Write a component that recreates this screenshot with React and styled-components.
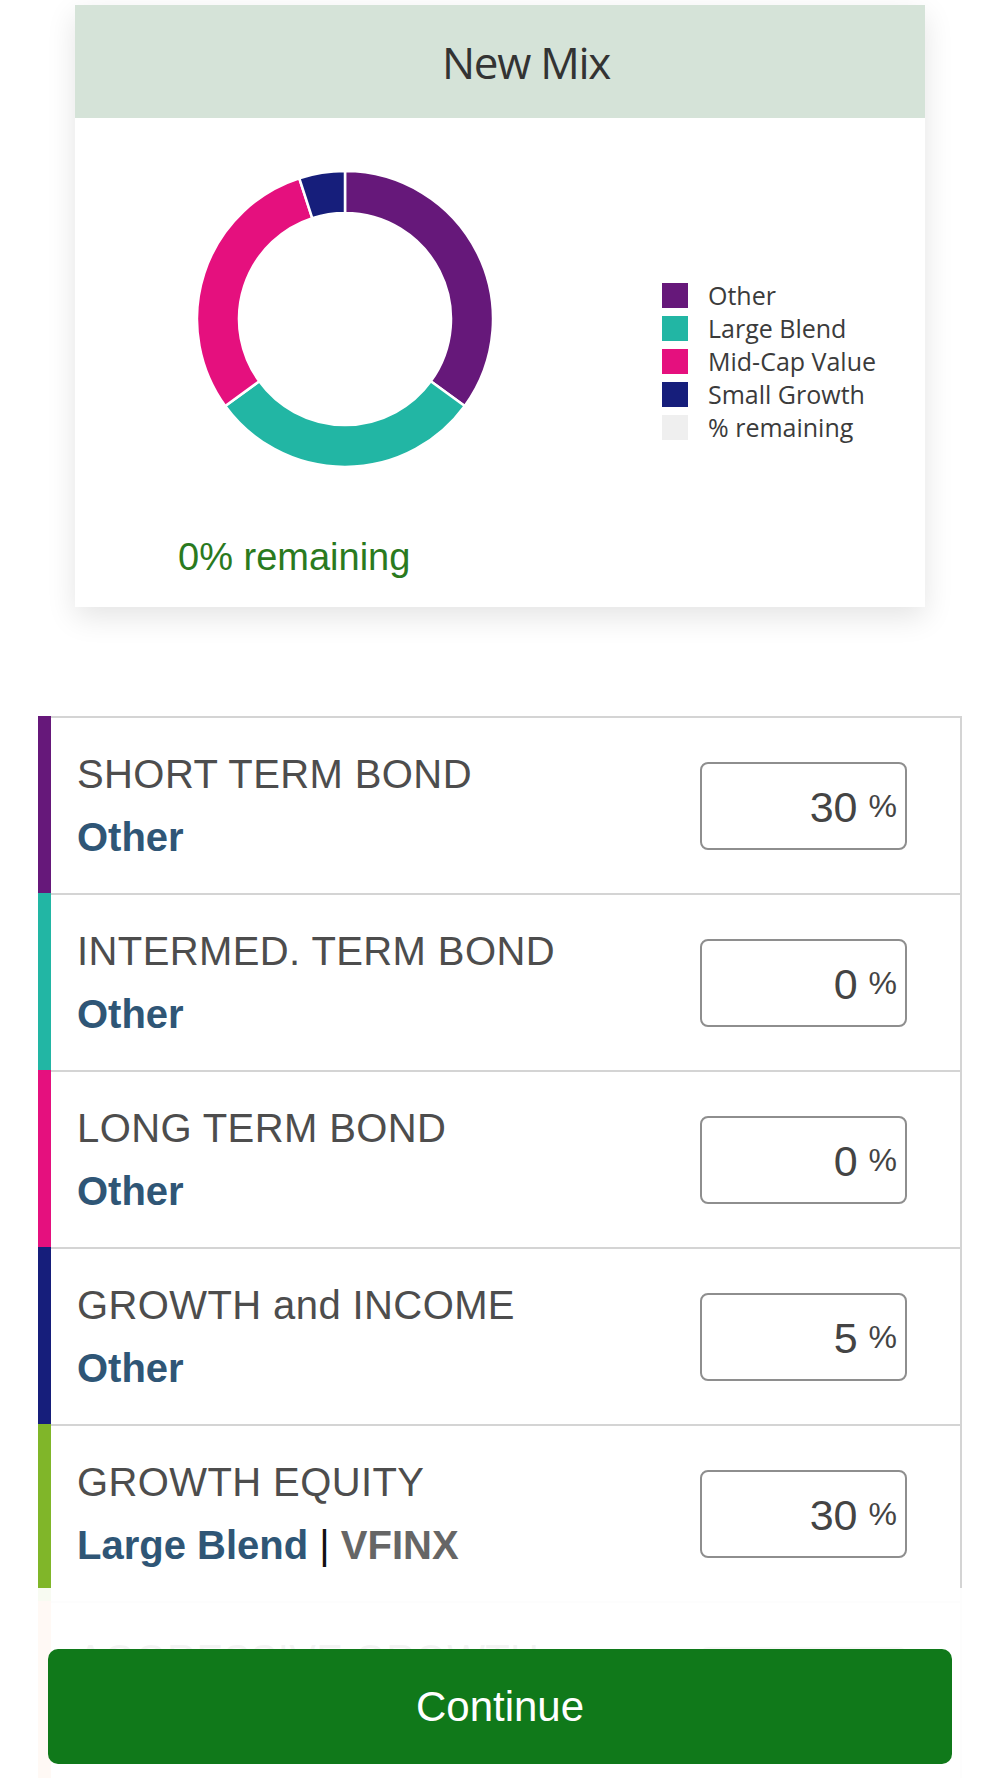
import React from 'react';
import styled, { createGlobalStyle } from 'styled-components';

const GlobalStyle = createGlobalStyle`
  html, body {
    margin: 0;
    padding: 0;
    background: #fff;
  }
  body {
    font-family: "Liberation Sans", Arial, sans-serif;
  }
`;

const Page = styled.div`
  position: relative;
  width: 1000px;
  min-height: 1778px;
  padding-top: 5px;
  box-sizing: border-box;
`;

const Card = styled.section`
  width: 850px;
  margin-left: 75px;
  background: #fff;
  box-shadow: 0 10px 28px rgba(0, 0, 0, 0.11);
`;

const CardHeader = styled.header`
  height: 113px;
  background: #d5e3d8;
  display: flex;
  align-items: center;
  justify-content: center;
  padding-left: 52px;
  font-family: "Open Sans", sans-serif;
  font-size: 44px;
  letter-spacing: -1.3px;
  color: #333;
`;

const CardBody = styled.div`
  padding-bottom: 28px;
`;

const ChartRow = styled.div`
  display: flex;
  align-items: flex-start;
`;

const Donut = styled.svg`
  display: block;
  margin-left: 120px;
  margin-top: 51px;
  flex: none;
`;

const Legend = styled.ul`
  list-style: none;
  margin: 165px 0 0 167px;
  padding: 0;
  display: flex;
  flex-direction: column;
  gap: 8px;
`;

const LegendItem = styled.li`
  display: flex;
  align-items: center;
  gap: 20px;
  height: 25px;
  font-family: "Open Sans", sans-serif;
  font-size: 25px;
  line-height: 25px;
  color: #3b3b3b;
`;

const Swatch = styled.span`
  width: 26px;
  height: 25px;
  background: ${(p) => p.color};
  flex: none;
`;

const Remaining = styled.div`
  margin-top: 66px;
  padding-left: 103px;
  font-size: 38px;
  line-height: 44px;
  color: #2a7a1e;
`;

const List = styled.div`
  width: 924px;
  margin: 109px 0 0 38px;
`;

const Row = styled.div`
  display: flex;
  height: 177px;
`;

const Bar = styled.div`
  width: 13px;
  flex: none;
  background: ${(p) => p.color};
`;

const RowBody = styled.div`
  flex: 1;
  display: flex;
  align-items: center;
  justify-content: space-between;
  border-top: 2px solid #d4d4d4;
  border-right: 2px solid #d4d4d4;
  padding: 0 53px 0 26px;
`;

const TextCol = styled.div`
  display: flex;
  flex-direction: column;
  gap: 15px;
`;

const Title = styled.div`
  font-size: 40px;
  line-height: 48px;
  letter-spacing: 0.4px;
  color: #4d4d4d;
`;

const Sub = styled.div`
  font-size: 40px;
  line-height: 48px;
  color: #111;
`;

const Category = styled.span`
  font-weight: bold;
  color: #2f5676;
`;

const Ticker = styled.span`
  font-weight: bold;
  color: #666;
`;

const PctBox = styled.div`
  width: 207px;
  height: 88px;
  box-sizing: border-box;
  border: 2px solid #8e8e8e;
  border-radius: 8px;
  padding-right: 8px;
  text-align: right;
  font-size: 43px;
  line-height: 84px;
  color: #444;
  white-space: nowrap;
`;

const PctSign = styled.span`
  font-size: 32px;
  vertical-align: 5px;
  margin-left: 11px;
`;

const Footer = styled.footer`
  position: fixed;
  left: 0;
  bottom: 0;
  width: 1000px;
  height: 190px;
  box-sizing: border-box;
  padding: 61px 48px 14px;
  background: rgba(255, 255, 255, 0.94);
`;

const ContinueButton = styled.button`
  display: block;
  width: 100%;
  height: 115px;
  border: none;
  border-radius: 10px;
  background: #10791a;
  color: #fff;
  font-family: "Liberation Sans", Arial, sans-serif;
  font-size: 42px;
  cursor: pointer;
`;

const COLORS = {
  other: '#66187a',
  large: '#22b6a4',
  mid: '#e5107e',
  small: '#161e7b',
  remaining: '#efefef',
};

const slices = [
  { label: 'Other', value: 35, color: COLORS.other },
  { label: 'Large Blend', value: 30, color: COLORS.large },
  { label: 'Mid-Cap Value', value: 30, color: COLORS.mid },
  { label: 'Small Growth', value: 5, color: COLORS.small },
];

const legend = [...slices, { label: '% remaining', color: COLORS.remaining }];

const funds = [
  { name: 'SHORT TERM BOND', category: 'Other', pct: 30, color: '#66187a' },
  { name: 'INTERMED. TERM BOND', category: 'Other', pct: 0, color: '#22b6a4' },
  { name: 'LONG TERM BOND', category: 'Other', pct: 0, color: '#e5107e' },
  { name: 'GROWTH and INCOME', category: 'Other', pct: 5, color: '#161e7b' },
  { name: 'GROWTH EQUITY', category: 'Large Blend', ticker: 'VFINX', pct: 30, color: '#80b629' },
  { name: 'AGGRESSIVE GROWTH', category: 'Mid-Cap Value', pct: 30, color: '#f39a52' },
];

const cx = 150;
const cy = 150;
const R = 148;
const r = 106;

const pt = (a, rad) => [cx + rad * Math.sin(a), cy - rad * Math.cos(a)];

const arcPath = (start, end) => {
  const a0 = (start / 100) * Math.PI * 2;
  const a1 = (end / 100) * Math.PI * 2;
  const large = end - start > 50 ? 1 : 0;
  const [x0, y0] = pt(a0, R);
  const [x1, y1] = pt(a1, R);
  const [x2, y2] = pt(a1, r);
  const [x3, y3] = pt(a0, r);
  return `M${x0} ${y0} A${R} ${R} 0 ${large} 1 ${x1} ${y1} L${x2} ${y2} A${r} ${r} 0 ${large} 0 ${x3} ${y3} Z`;
};

const DonutChart = () => {
  let acc = 0;
  return (
    <Donut width="300" height="300" viewBox="0 0 300 300">
      {slices.map((s) => {
        const start = acc;
        acc += s.value;
        return (
          <path
            key={s.label}
            d={arcPath(start, acc)}
            fill={s.color}
            stroke="#fff"
            strokeWidth="2.5"
          />
        );
      })}
    </Donut>
  );
};

const App = () => (
  <Page>
    <GlobalStyle />
    <Card>
      <CardHeader>New Mix</CardHeader>
      <CardBody>
        <ChartRow>
          <DonutChart />
          <Legend>
            {legend.map((l) => (
              <LegendItem key={l.label}>
                <Swatch color={l.color} />
                {l.label}
              </LegendItem>
            ))}
          </Legend>
        </ChartRow>
        <Remaining>0% remaining</Remaining>
      </CardBody>
    </Card>

    <List>
      {funds.map((f) => (
        <Row key={f.name}>
          <Bar color={f.color} />
          <RowBody>
            <TextCol>
              <Title>{f.name}</Title>
              <Sub>
                <Category>{f.category}</Category>
                {f.ticker && (
                  <>
                    {' | '}
                    <Ticker>{f.ticker}</Ticker>
                  </>
                )}
              </Sub>
            </TextCol>
            <PctBox>
              {f.pct}
              <PctSign>%</PctSign>
            </PctBox>
          </RowBody>
        </Row>
      ))}
    </List>

    <Footer>
      <ContinueButton>Continue</ContinueButton>
    </Footer>
  </Page>
);

export default App;
